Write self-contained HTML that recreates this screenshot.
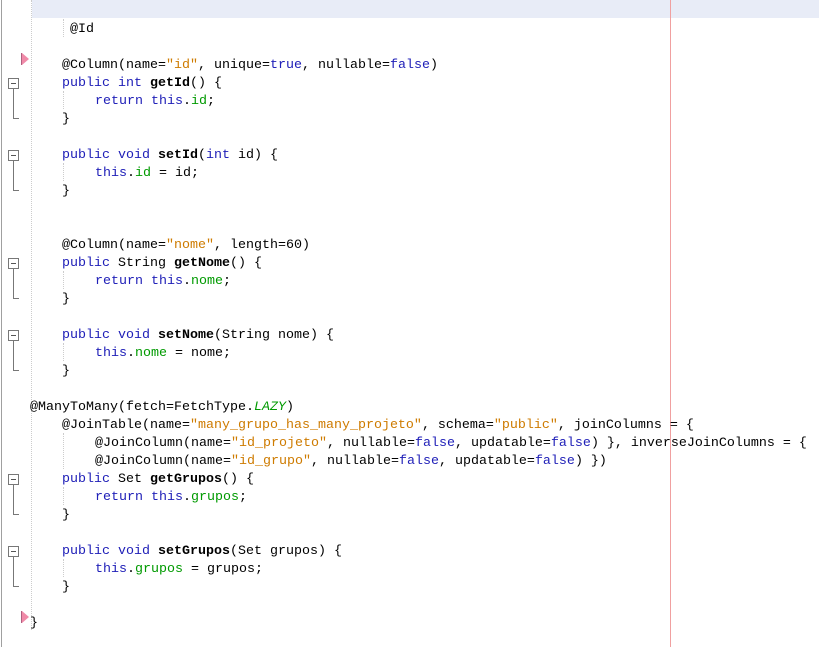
<!DOCTYPE html>
<html><head><meta charset="utf-8"><style>
html,body{margin:0;padding:0;background:#fff;width:819px;height:647px;overflow:hidden;position:relative;}
.l{position:absolute;font-family:"Liberation Mono",monospace;font-size:13.33px;line-height:18px;height:18px;white-space:pre;color:#000;}
.k{color:#2020b8}
.s{color:#ce7b00}
.f{color:#009a00}
.b{font-weight:bold}
.i{font-style:italic;color:#009a00}
.fold{position:absolute;left:8px;width:9px;height:9px;border:1px solid #777;background:#fff;}
.fold:after{content:"";position:absolute;left:2px;top:4px;width:5px;height:1px;background:#555;}
.vl{position:absolute;left:13px;width:1px;background:#777;}
.hl{position:absolute;left:13px;width:6px;height:1px;background:#777;}
.tri{position:absolute;left:22px;width:0;height:0;border-top:6px solid transparent;border-bottom:6px solid transparent;border-left:7px solid #f08aa8;}
.tri:before{content:"";position:absolute;left:-8px;top:-6px;width:1px;height:12px;background:#b06080;}
.g{position:absolute;width:0;border-left:1px dotted #ccc;}
</style></head><body>
<div style="position:absolute;left:1px;top:0;width:1px;height:647px;background:#a0a0a0"></div>
<div style="position:absolute;left:32px;top:0;width:787px;height:18px;background:#e8ecf7"></div>
<div class="g" style="left:31px;top:0;height:630px"></div>
<div style="position:absolute;left:670px;top:0;width:1px;height:647px;background:#f0a0a0"></div>
<div class="g" style="left:63px;top:19px;height:18px"></div>
<div class="g" style="left:63px;top:91px;height:18px"></div>
<div class="g" style="left:63px;top:163px;height:18px"></div>
<div class="g" style="left:63px;top:271px;height:18px"></div>
<div class="g" style="left:63px;top:343px;height:18px"></div>
<div class="g" style="left:63px;top:433px;height:36px"></div>
<div class="g" style="left:63px;top:487px;height:18px"></div>
<div class="g" style="left:63px;top:559px;height:18px"></div>

<div class="tri" style="top:53px"></div>
<div class="tri" style="top:611px"></div>

<div class="fold" style="top:78px"></div><div class="vl" style="top:89px;height:29px"></div><div class="hl" style="top:118px"></div>
<div class="fold" style="top:150px"></div><div class="vl" style="top:161px;height:29px"></div><div class="hl" style="top:190px"></div>
<div class="fold" style="top:258px"></div><div class="vl" style="top:269px;height:29px"></div><div class="hl" style="top:298px"></div>
<div class="fold" style="top:330px"></div><div class="vl" style="top:341px;height:29px"></div><div class="hl" style="top:370px"></div>
<div class="fold" style="top:474px"></div><div class="vl" style="top:485px;height:29px"></div><div class="hl" style="top:514px"></div>
<div class="fold" style="top:546px"></div><div class="vl" style="top:557px;height:29px"></div><div class="hl" style="top:586px"></div>

<div class="l" style="left:70px;top:21px">@Id</div>
<div class="l" style="left:62px;top:57px">@Column(name=<span class="s">"id"</span>, unique=<span class="k">true</span>, nullable=<span class="k">false</span>)</div>
<div class="l" style="left:62px;top:75px"><span class="k">public int</span> <span class="b">getId</span>() {</div>
<div class="l" style="left:95px;top:93px"><span class="k">return this</span>.<span class="f">id</span>;</div>
<div class="l" style="left:62px;top:111px">}</div>
<div class="l" style="left:62px;top:147px"><span class="k">public void</span> <span class="b">setId</span>(<span class="k">int</span> id) {</div>
<div class="l" style="left:95px;top:165px"><span class="k">this</span>.<span class="f">id</span> = id;</div>
<div class="l" style="left:62px;top:183px">}</div>
<div class="l" style="left:62px;top:237px">@Column(name=<span class="s">"nome"</span>, length=60)</div>
<div class="l" style="left:62px;top:255px"><span class="k">public</span> String <span class="b">getNome</span>() {</div>
<div class="l" style="left:95px;top:273px"><span class="k">return this</span>.<span class="f">nome</span>;</div>
<div class="l" style="left:62px;top:291px">}</div>
<div class="l" style="left:62px;top:327px"><span class="k">public void</span> <span class="b">setNome</span>(String nome) {</div>
<div class="l" style="left:95px;top:345px"><span class="k">this</span>.<span class="f">nome</span> = nome;</div>
<div class="l" style="left:62px;top:363px">}</div>
<div class="l" style="left:30px;top:399px">@ManyToMany(fetch=FetchType.<span class="i">LAZY</span>)</div>
<div class="l" style="left:62px;top:417px">@JoinTable(name=<span class="s">"many_grupo_has_many_projeto"</span>, schema=<span class="s">"public"</span>, joinColumns = {</div>
<div class="l" style="left:95px;top:435px">@JoinColumn(name=<span class="s">"id_projeto"</span>, nullable=<span class="k">false</span>, updatable=<span class="k">false</span>) }, inverseJoinColumns = {</div>
<div class="l" style="left:95px;top:453px">@JoinColumn(name=<span class="s">"id_grupo"</span>, nullable=<span class="k">false</span>, updatable=<span class="k">false</span>) })</div>
<div class="l" style="left:62px;top:471px"><span class="k">public</span> Set <span class="b">getGrupos</span>() {</div>
<div class="l" style="left:95px;top:489px"><span class="k">return this</span>.<span class="f">grupos</span>;</div>
<div class="l" style="left:62px;top:507px">}</div>
<div class="l" style="left:62px;top:543px"><span class="k">public void</span> <span class="b">setGrupos</span>(Set grupos) {</div>
<div class="l" style="left:95px;top:561px"><span class="k">this</span>.<span class="f">grupos</span> = grupos;</div>
<div class="l" style="left:62px;top:579px">}</div>
<div class="l" style="left:30px;top:615px">}</div>
</body></html>
